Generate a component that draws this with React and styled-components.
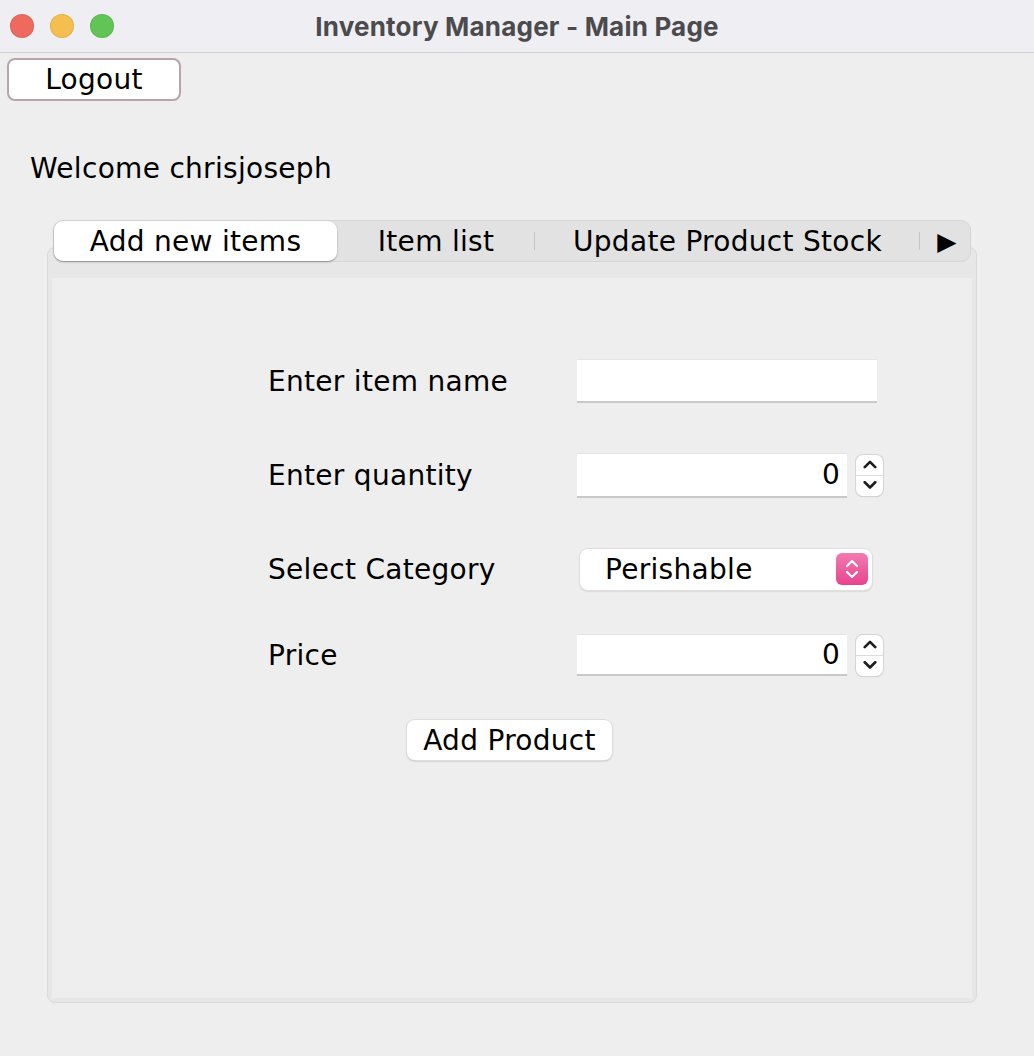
import React from 'react';
import styled, { createGlobalStyle } from 'styled-components';

const GlobalStyle = createGlobalStyle`
    html, body {
        margin: 0;
        padding: 0;
        background: #eeeeee;
    }
    body {
        font-family: "DejaVu Sans", "Noto Sans", sans-serif;
        font-size: 28px;
        letter-spacing: 0.3px;
        color: #000;
    }
`

const Window = styled.div`
    width: 1034px;
    height: 1056px;
    background: #eeeeee;
    display: flex;
    flex-direction: column;
    overflow: hidden;
`

const TitleBar = styled.div`
    height: 52px;
    flex: none;
    background: #efeef3;
    border-bottom: 1px solid #d2d2d4;
    display: flex;
    align-items: center;
    position: relative;
`

const Lights = styled.div`
    display: flex;
    gap: 16px;
    padding-left: 10px;
`

const Light = styled.span`
    width: 24px;
    height: 24px;
    border-radius: 50%;
    background: ${p => p.color};
    box-shadow: inset 0 0 0 1px rgba(0,0,0,.08);
`

const Title = styled.div`
    position: absolute;
    left: 0;
    right: 0;
    text-align: center;
    font-family: Inter, "Liberation Sans", sans-serif;
    font-weight: 700;
    font-size: 26px;
    letter-spacing: 0.2px;
    color: #4b4b4d;
    pointer-events: none;
`

const LogoutButton = styled.button`
    margin: 5px 0 0 7px;
    width: 174px;
    height: 43px;
    background: #fff;
    border: 2px solid #b9a3ad;
    border-radius: 8px;
    font: inherit;
    letter-spacing: inherit;
    color: #000;
    padding: 0;
    align-self: flex-start;
`

const Welcome = styled.div`
    margin: 52px 0 0 30px;
    line-height: 32px;
`

const TabPane = styled.div`
    margin: 35px 57px 0 47px;
    display: flex;
    flex-direction: column;
`

const TabBar = styled.div`
    margin: 0 6px;
    height: 42px;
    box-sizing: border-box;
    background: #e2e2e2;
    border: 1px solid #d6d6d6;
    border-radius: 10px;
    display: flex;
    align-items: stretch;
    position: relative;
    z-index: 1;
`

const Tab = styled.div`
    width: ${p => p.w}px;
    flex: none;
    display: flex;
    align-items: center;
    justify-content: center;
    position: relative;
    font-size: ${p => p.size || 28}px;
    background: ${p => (p.active ? '#fff' : 'transparent')};
    border-radius: ${p => (p.active ? '9px' : '0')};
    box-shadow: ${p => (p.active ? '0 1px 2px rgba(0,0,0,.35)' : 'none')};
    &::after {
        content: '';
        display: ${p => (p.sep ? 'block' : 'none')};
        position: absolute;
        right: 0;
        top: 11px;
        bottom: 11px;
        width: 1px;
        background: #c4c4c4;
    }
`

const Panel = styled.div`
    margin-top: -15px;
    height: 756px;
    box-sizing: border-box;
    border: 1px solid #dadada;
    border-radius: 8px;
    background: #e7e7e7;
    padding: 30px 4px 4px;
    display: flex;
`

const PanelBody = styled.div`
    flex: 1;
    background: #eeeeee;
    padding-top: 56px;
    display: flex;
    flex-direction: column;
`

const Row = styled.div`
    height: ${p => p.h}px;
    display: flex;
    align-items: center;
    padding-left: 216px;
`

const Label = styled.div`
    width: 309px;
    flex: none;
`

const TextField = styled.div`
    width: ${p => p.w}px;
    height: ${p => p.h}px;
    box-sizing: border-box;
    background: #fff;
    border-top: 1px solid #e4e4e4;
    border-bottom: 2px solid #c9c9c9;
    display: flex;
    align-items: center;
    justify-content: flex-end;
    padding-right: 7px;
`

const Spinner = styled.div`
    margin-left: 9px;
    width: 27px;
    height: 41px;
    box-sizing: border-box;
    background: #fff;
    border-radius: 7px;
    box-shadow: 0 0 0 1px #d4d4d4, 0 1px 1px rgba(0,0,0,.2);
    display: flex;
    flex-direction: column;
    & > span {
        flex: 1;
        display: flex;
        align-items: center;
        justify-content: center;
    }
    & > span + span {
        border-top: 1px solid #dcdcdc;
    }
`

const Combo = styled.div`
    margin-left: 3px;
    width: 292px;
    height: 41px;
    box-sizing: border-box;
    background: #fff;
    border-radius: 8px;
    box-shadow: 0 0 0 1px #dedede, 0 1px 2px rgba(0,0,0,.25);
    display: flex;
    align-items: center;
    justify-content: space-between;
    padding: 0 4px 0 25px;
`

const ComboArrow = styled.span`
    width: 32px;
    height: 32px;
    border-radius: 6px;
    background: linear-gradient(#f27bb0, #e8438d);
    display: flex;
    align-items: center;
    justify-content: center;
`

const ButtonRow = styled.div`
    margin-top: 26px;
    display: flex;
    padding-left: 355px;
`

const AddButton = styled.button`
    width: 205px;
    height: 40px;
    background: #fff;
    border: none;
    border-radius: 8px;
    box-shadow: 0 0 0 1px #dcdcdc, 0 1px 2px rgba(0,0,0,.3);
    font: inherit;
    letter-spacing: inherit;
    color: #000;
    padding: 0;
`

const Chevron = ({ up, color = '#1e1e1e', size = 14 }) => (
    <svg width={size} height={size * 0.6} viewBox="0 0 12 7">
        <path
            d={up ? 'M1.5 6 L6 1.5 L10.5 6' : 'M1.5 1 L6 5.5 L10.5 1'}
            fill="none"
            stroke={color}
            strokeWidth="2.3"
            strokeLinecap="round"
            strokeLinejoin="round"
        />
    </svg>
)

const NumberSpinner = () => (
    <Spinner>
        <span><Chevron up /></span>
        <span><Chevron /></span>
    </Spinner>
)

const App = () => {
    return (
        <Window>
            <GlobalStyle />
            <TitleBar>
                <Lights>
                    <Light color="#ee6a5f" />
                    <Light color="#f5bf4f" />
                    <Light color="#61c555" />
                </Lights>
                <Title>Inventory Manager - Main Page</Title>
            </TitleBar>
            <LogoutButton>Logout</LogoutButton>
            <Welcome>Welcome chrisjoseph</Welcome>
            <TabPane>
                <TabBar>
                    <Tab w={283} active>Add new items</Tab>
                    <Tab w={198} sep>Item list</Tab>
                    <Tab w={385} sep>Update Product Stock</Tab>
                    <Tab w={54} size={25}>▶</Tab>
                </TabBar>
                <Panel>
                    <PanelBody>
                        <Row h={94}>
                            <Label>Enter item name</Label>
                            <TextField w={300} h={44} />
                        </Row>
                        <Row h={94}>
                            <Label>Enter quantity</Label>
                            <TextField w={270} h={45}>0</TextField>
                            <NumberSpinner />
                        </Row>
                        <Row h={94}>
                            <Label>Select Category</Label>
                            <Combo>
                                Perishable
                                <ComboArrow>
                                    <svg width="16" height="24" viewBox="0 0 16 24">
                                        <path d="M3 9 L8 4 L13 9 M3 15 L8 20 L13 15" fill="none" stroke="#fff" strokeWidth="2.2" strokeLinecap="round" strokeLinejoin="round" />
                                    </svg>
                                </ComboArrow>
                            </Combo>
                        </Row>
                        <Row h={78}>
                            <Label>Price</Label>
                            <TextField w={270} h={42}>0</TextField>
                            <NumberSpinner />
                        </Row>
                        <ButtonRow>
                            <AddButton>Add Product</AddButton>
                        </ButtonRow>
                    </PanelBody>
                </Panel>
            </TabPane>
        </Window>
    )
}

export default App
